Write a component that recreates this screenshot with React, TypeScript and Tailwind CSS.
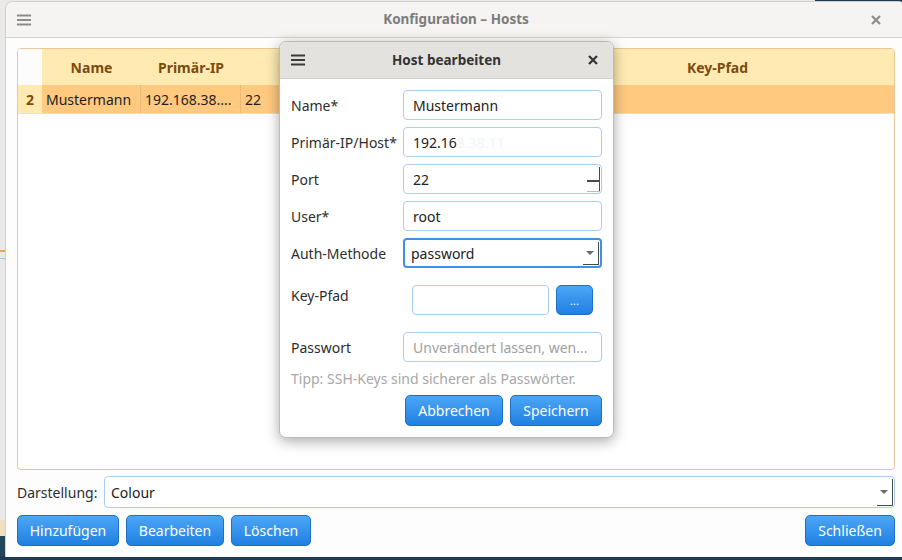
import React from "react";

function Burger({ color }: { color: string }) {
  return (
    <svg width="14" height="12" viewBox="0 0 14 12">
      <rect x="0" y="0.5" width="14" height="2" fill={color} />
      <rect x="0" y="5" width="14" height="2" fill={color} />
      <rect x="0" y="9.5" width="14" height="2" fill={color} />
    </svg>
  );
}

function CloseX({ color, w = 2 }: { color: string; w?: number }) {
  return (
    <svg width="10" height="10" viewBox="0 0 10 10">
      <path d="M1 1 L9 9 M9 1 L1 9" stroke={color} strokeWidth={w} />
    </svg>
  );
}

function BlueButton({ label, className = "" }: { label: string; className?: string }) {
  return (
    <button
      className={`h-[31px] rounded-[5px] border border-[#1f6fc5] bg-gradient-to-b from-[#4ba6f6] to-[#1f80e2] text-white text-[14px] leading-none ${className}`}
    >
      {label}
    </button>
  );
}

function ComboBracket() {
  // the odd dark corner of the native combo arrow area
  return (
    <>
      <span className="absolute right-[1px] top-[2px] bottom-[1px] w-[1.5px] bg-[#4a4a4a]" />
      <span className="absolute right-[1px] bottom-[1px] w-[16px] h-[1.5px] bg-[#4a4a4a]" />
      <span className="absolute right-[6px] top-1/2 -translate-y-1/2 w-0 h-0 border-l-[4px] border-r-[4px] border-t-[4px] border-l-transparent border-r-transparent border-t-[#6a6a6a]" />
    </>
  );
}

const cols = [
  { w: "w-[99px]", h: "Name", v: "Mustermann" },
  { w: "w-[100px]", h: "Primär-IP", v: "192.168.38...." },
  { w: "w-[104px]", h: "Port", v: "22" },
  { w: "w-[100px]", h: "", v: "" },
  { w: "w-[96px]", h: "", v: "" },
  { w: "flex-1", h: "Key-Pfad", v: "" },
];

function Field({ label, children }: { label: string; children: React.ReactNode }) {
  return (
    <div className="flex items-center h-[30px] mb-[7px]">
      <div className="w-[112px] text-[14px] text-[#2e2e2e]">{label}</div>
      <div className="flex-1 relative h-full">{children}</div>
    </div>
  );
}

const boxCls =
  "h-full w-full rounded-[4px] border border-[#a9cdf3] bg-white px-[9px] flex items-center text-[14px]";

export default function App() {
  return (
    <div className="relative w-[902px] h-[560px] overflow-hidden bg-[#e9e9e9] font-['Noto_Sans',sans-serif]">
      {/* desktop behind */}
      <div className="absolute left-0 top-[250px] w-[6px] h-[2px] bg-[#e0a860]" />
      <div className="absolute left-0 top-[258px] w-[6px] h-[1px] bg-[#9cc4e8]" />
      <div className="absolute left-0 top-[520px] w-[6px] h-[16px] bg-[#f0e2c0]" />
      <div className="absolute left-0 top-[536px] w-[6px] h-[24px] bg-[#24465c]" />
      <div className="absolute left-0 bottom-0 w-full h-[4px] bg-[#1d3c52]" />
      <div className="absolute left-[815px] top-0 w-[87px] h-[2px] bg-[#1d3c52]" />

      {/* main window */}
      <div className="absolute left-[5px] top-[1px] w-[901px] h-[556px] rounded-t-[8px] border-l border-t border-[#cfcfcf] bg-[#fdfdfd] flex flex-col overflow-hidden">
        <div className="h-[36px] shrink-0 bg-[#f5f4f2] border-b border-[#d6d4d1] flex items-center px-[11px] relative">
          <Burger color="#8c8c8c" />
          <div className="absolute inset-0 flex items-center justify-center text-[13.5px] font-bold text-[#7c7c7c]">
            Konfiguration – Hosts
          </div>
          <div className="ml-auto mr-[14px] flex items-center">
            <CloseX color="#8c8c8c" w={2.2} />
          </div>
        </div>

        <div className="flex-1 flex flex-col px-[11px] pt-[10px] pb-[9px]">
          {/* table */}
          <div className="h-[422px] rounded-[4px] border border-[#e6c898] bg-white overflow-hidden flex flex-col">
            <div className="flex h-[36px] shrink-0">
              <div className="w-[24px] bg-[#fcfcfc]" />
              {cols.map((c, i) => (
                <div
                  key={i}
                  className={`${c.w} bg-[#ffebb2] flex items-center justify-center text-[14px] font-bold text-[#7d4a10]`}
                >
                  {c.h}
                </div>
              ))}
            </div>
            <div className="flex h-[29px] shrink-0 border-b border-[#e0e0e0]">
              <div className="w-[24px] bg-[#ffebb2] flex items-center justify-center text-[14px] font-bold text-[#7d4a10]">
                2
              </div>
              {cols.map((c, i) => (
                <div
                  key={i}
                  className={`${c.w} bg-[#ffca80] flex items-center px-[4px] text-[14px] text-[#1e1e1e] ${
                    i < cols.length - 1 ? "border-r border-[#e9bb78]" : ""
                  }`}
                >
                  {c.v}
                </div>
              ))}
            </div>
            <div className="flex-1" />
          </div>

          <div className="flex items-center mt-[6px] h-[32px]">
            <div className="w-[87px] text-[14px] text-[#2e2e2e]">Darstellung:</div>
            <div className="relative flex-1 h-full rounded-[4px] border border-[#a9cdf3] bg-white flex items-center px-[6px] text-[14px] text-[#222]">
              Colour
              <ComboBracket />
            </div>
          </div>

          <div className="flex mt-[7px] gap-[7px]">
            <BlueButton label="Hinzufügen" className="w-[102px]" />
            <BlueButton label="Bearbeiten" className="w-[98px]" />
            <BlueButton label="Löschen" className="w-[80px]" />
            <BlueButton label="Schließen" className="w-[90px] ml-auto" />
          </div>
        </div>
      </div>

      {/* dialog */}
      <div className="absolute left-[279px] top-[41px] w-[335px] h-[397px] rounded-[7px] border border-[#bdbbb8] bg-white shadow-[0_3px_14px_rgba(0,0,0,0.35)] overflow-hidden flex flex-col">
        <div className="h-[37px] shrink-0 bg-[#e4e2df] border-b border-[#d2d0cd] relative flex items-center px-[11px]">
          <Burger color="#3a3a3a" />
          <div className="absolute inset-0 flex items-center justify-center text-[13.5px] font-bold text-[#333]">
            Host bearbeiten
          </div>
          <div className="ml-auto mr-[4px] flex items-center">
            <CloseX color="#333" w={2.2} />
          </div>
        </div>

        <div className="flex-1 px-[11px] pt-[11px]">
          <Field label="Name*">
            <div className={`${boxCls} text-[#222]`}>Mustermann</div>
          </Field>
          <Field label="Primär-IP/Host*">
            <div className={`${boxCls} text-[#222]`}>
              192.16<span className="text-[#f1f5fa]">8.38.11</span>
            </div>
          </Field>
          <Field label="Port">
            <div className={`${boxCls} text-[#222] relative`}>
              22
              <span className="absolute right-[1px] top-[2px] bottom-[1px] w-[1.5px] bg-[#4a4a4a]" />
              <span className="absolute right-[1px] top-[15px] w-[13px] h-[1.5px] bg-[#4a4a4a]" />
              <span className="absolute right-[1px] bottom-[1px] w-[13px] h-[1px] bg-[#bdbdbd]" />
            </div>
          </Field>
          <Field label="User*">
            <div className={`${boxCls} text-[#222]`}>root</div>
          </Field>
          <Field label="Auth-Methode">
            <div className="h-full w-full rounded-[4px] border-2 border-[#3d8fe8] bg-white px-[6px] flex items-center text-[14px] text-[#222] relative">
              password
              <ComboBracket />
            </div>
          </Field>

          <div className="flex h-[30px] mt-[17px]">
            <div className="w-[112px] text-[14px] text-[#2e2e2e]">Key-Pfad</div>
            <div className="flex-1 flex px-[9px] gap-[7px]">
              <div className="flex-1 rounded-[4px] border border-[#a9cdf3] bg-white" />
              <button className="w-[37px] h-[30px] rounded-[5px] border border-[#1f6fc5] bg-gradient-to-b from-[#4ba6f6] to-[#1f80e2] text-white text-[11px] leading-none">
                ...
              </button>
            </div>
          </div>

          <div className="mt-[17px]">
            <Field label="Passwort">
              <div className={`${boxCls} text-[#a0a0a0]`}>Unverändert lassen, wen...</div>
            </Field>
          </div>

          <div className="text-[14px] text-[#a8a8a8] leading-[20px]">
            Tipp: SSH-Keys sind sicherer als Passwörter.
          </div>

          <div className="flex justify-end gap-[7px] mt-[6px]">
            <BlueButton label="Abbrechen" className="w-[98px]" />
            <BlueButton label="Speichern" className="w-[92px]" />
          </div>
        </div>
      </div>
    </div>
  );
}
